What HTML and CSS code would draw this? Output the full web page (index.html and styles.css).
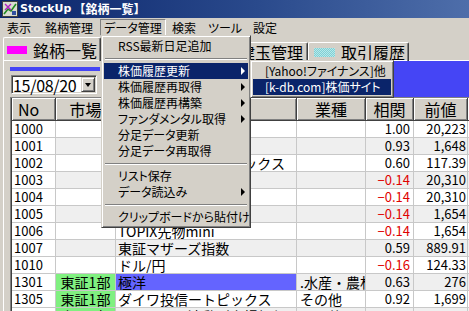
FILE: index.html
```html
<!DOCTYPE html>
<html lang="ja">
<head>
<meta charset="utf-8">
<title>StockUp</title>
<link rel="stylesheet" href="styles.css">
</head>
<body>
<div class="titlebar">
  <svg class="appicon" viewBox="0 0 16 16"><rect x="0.5" y="0.5" width="15" height="15" fill="#d8dcd0" stroke="#404040"/><path d="M2 13 L6 8 L9 10 L14 3" stroke="#208a20" stroke-width="1.6" fill="none"/><path d="M3 3 L9 9 M9 3 L3 9" stroke="#b020c0" stroke-width="1.4"/><rect x="10" y="10" width="4" height="4" fill="#3050a0"/></svg>
  <span class="t-en">StockUp</span><span class="t-jp">【銘柄一覧】</span>
</div>
<div class="menubar">
  <span class="mb w-hyoji">表示</span>
  <span class="mb w-meigara">銘柄管理</span>
  <span class="mb w-data pressed">データ管理</span>
  <span class="mb w-kensaku">検索</span>
  <span class="mb w-tool">ツール</span>
  <span class="mb w-settei">設定</span>
</div>
<div class="tabs">
  <div class="tab sel t1"><span class="sw mag"></span>銘柄一覧</div>
  <div class="tab t2"><span class="sw yel"></span>チャート</div>
  <div class="tab t3"><span class="sw org"></span>建玉管理</div>
  <div class="tab t4"><span class="sw cyan"></span>取引履歴</div>
</div>
<div class="panel">
  <div class="toolbar">
    <div class="datepane">
      <div class="bluebar"></div>
      <div class="combo"><span class="combo-text">15/08/20</span><span class="combo-btn"><span class="down"></span></span></div>
    </div>
    <div class="bluepane"></div>
  </div>
  <div class="grid">
    <div class="row head">
      <div class="c h-no">No</div><div class="c">市場</div><div class="c"></div><div class="c">業種</div><div class="c">相関</div><div class="c">前値</div><div class="c"></div>
    </div>
    <div class="row"><div class="c no">1000</div><div class="c mk"></div><div class="c nm">日経平均株価</div><div class="c gy"></div><div class="c num">1.00</div><div class="c num pv">20,223</div><div class="c ex"></div></div>
    <div class="row alt"><div class="c no">1001</div><div class="c mk"></div><div class="c nm">TOPIX</div><div class="c gy"></div><div class="c num">0.93</div><div class="c num pv">1,648</div><div class="c ex"></div></div>
    <div class="row"><div class="c no">1002</div><div class="c mk"></div><div class="c nm">ジャスダックインデックス</div><div class="c gy"></div><div class="c num">0.60</div><div class="c num pv">117.39</div><div class="c ex"></div></div>
    <div class="row alt"><div class="c no">1003</div><div class="c mk"></div><div class="c nm">日経225先物</div><div class="c gy"></div><div class="c num neg">−0.14</div><div class="c num pv">20,310</div><div class="c ex"></div></div>
    <div class="row"><div class="c no">1004</div><div class="c mk"></div><div class="c nm">日経225mini</div><div class="c gy"></div><div class="c num neg">−0.14</div><div class="c num pv">20,310</div><div class="c ex"></div></div>
    <div class="row alt"><div class="c no">1005</div><div class="c mk"></div><div class="c nm">TOPIX先物</div><div class="c gy"></div><div class="c num neg">−0.14</div><div class="c num pv">1,654</div><div class="c ex"></div></div>
    <div class="row"><div class="c no">1006</div><div class="c mk"></div><div class="c nm">TOPIX先物mini</div><div class="c gy"></div><div class="c num neg">−0.14</div><div class="c num pv">1,654</div><div class="c ex"></div></div>
    <div class="row alt"><div class="c no">1007</div><div class="c mk"></div><div class="c nm">東証マザーズ指数</div><div class="c gy"></div><div class="c num">0.59</div><div class="c num pv">889.91</div><div class="c ex"></div></div>
    <div class="row"><div class="c no">1010</div><div class="c mk"></div><div class="c nm">ドル/円</div><div class="c gy"></div><div class="c num neg">−0.16</div><div class="c num pv">124.33</div><div class="c ex"></div></div>
    <div class="row alt"><div class="c no">1301</div><div class="c mk green">東証1部</div><div class="c nm hl">極洋</div><div class="c gy">.水産・農林業</div><div class="c num">0.63</div><div class="c num pv">276</div><div class="c ex"></div></div>
    <div class="row"><div class="c no">1305</div><div class="c mk green">東証1部</div><div class="c nm">ダイワ投信ートピックス</div><div class="c gy">その他</div><div class="c num">0.92</div><div class="c num pv">1,699</div><div class="c ex"></div></div>
    <div class="row alt"><div class="c no">1306</div><div class="c mk green">東証1部</div><div class="c nm">ＴＯＰＩＸ連動型上場投信</div><div class="c gy">その他</div><div class="c num">0.92</div><div class="c num pv">1,675</div><div class="c ex"></div></div>
  </div>
</div>

<div class="menu">
  <div class="item">RSS最新日足追加</div>
  <div class="sep"></div>
  <div class="item active">株価履歴更新<span class="arrow"></span></div>
  <div class="item">株価履歴再取得<span class="arrow"></span></div>
  <div class="item">株価履歴再構築<span class="arrow"></span></div>
  <div class="item">ファンダメンタル取得<span class="arrow"></span></div>
  <div class="item">分足データ更新</div>
  <div class="item">分足データ再取得</div>
  <div class="sep"></div>
  <div class="item">リスト保存</div>
  <div class="item">データ読込み<span class="arrow"></span></div>
  <div class="sep"></div>
  <div class="item">クリップボードから貼付け</div>
</div>
<div class="menu submenu">
  <div class="item">[Yahoo!ファイナンス]他</div>
  <div class="item active">[k-db.com]株価サイト</div>
</div>
</body>
</html>
```

FILE: styles.css
```css
* { box-sizing: border-box; margin: 0; padding: 0; }
html, body { width: 469px; height: 311px; overflow: hidden; }
body {
  position: relative;
  background: #d4d0c8;
  color: #000;
  font-family: "Noto Sans CJK JP", "Noto Sans", sans-serif;
  font-size: 12px;
  line-height: 16px;
}

/* title bar */
.titlebar {
  height: 18px;
  display: flex;
  align-items: center;
  padding-left: 2px;
  color: #fff;
  background: linear-gradient(to right, #0a246a 0%, #2a4a8c 55%, #4e6eaa 100%);
}
.appicon { width: 16px; height: 16px; margin-right: 2px; flex: none; }
.t-en { font: bold 11px/16px "DejaVu Sans", sans-serif; }
.t-jp { font: bold 12px/16px "Noto Sans CJK JP", sans-serif; margin-left: 2px; }

/* menu bar */
.menubar {
  height: 19px;
  display: flex;
  padding-top: 1px;
  font-feature-settings: "palt";
}
.mb {
  height: 17px;
  line-height: 15px;
  text-align: center;
  border: 1px solid transparent;
}
.mb.pressed { border-color: #808080 #fff #fff #808080; }
.w-hyoji { width: 38px; }
.w-meigara { width: 62px; }
.w-data { width: 66px; }
.w-kensaku { width: 36px; }
.w-tool { width: 46px; }
.w-settei { width: 34px; }

/* tabs */
.tabs {
  height: 24px;
  display: flex;
  align-items: flex-end;
  padding-left: 3px;
  font-size: 16px;
  line-height: 16px;
  position: relative;
  z-index: 1;
}
.tab {
  height: 19px;
  display: flex;
  align-items: center;
  padding-left: 5px;
  border-top: 1px solid #fff;
  border-left: 1px solid #fff;
  border-right: 1px solid #404040;
  box-shadow: inset -1px 0 #808080;
  border-radius: 2px 2px 0 0;
  white-space: nowrap;
  overflow: hidden;
}
.tab.sel { height: 24px; padding-left: 3px; }
.t1 { width: 98px; }
.t2 { width: 105px; }
.t3 { width: 102px; }
.t4 { width: 101px; }
.sw { display: inline-block; flex: none; margin-right: 6px; }
.mag { width: 20px; height: 8px; background: #ff00ff; }
.cyan {
  width: 21px; height: 9px;
  background: repeating-conic-gradient(#7fd0d4 0 25%, #b8e8ea 0 50%) 0 0 / 2px 2px;
}
.yel { width: 21px; height: 9px; background: #ffff80; }
.org { width: 21px; height: 9px; background: #ffc080; }

/* panel */
.panel {
  margin-left: 3px;
  margin-top: -1px;
  border-top: 1px solid #fff;
  border-left: 1px solid #fff;
  height: 251px;
  padding-left: 6px;
}
.toolbar {
  height: 36px;
  display: flex;
}
.datepane { width: 90px; padding-top: 6px; }
.bluebar { height: 4px; background: #4545f5; }
.combo {
  margin: 4px 0 0 1px;
  width: 86px;
  height: 19px;
  background: #fff;
  border: 1px solid;
  border-color: #808080 #fff #fff #808080;
  box-shadow: inset 1px 1px #404040, inset -1px -1px #d4d0c8;
  display: flex;
  align-items: center;
  padding-left: 1px;
  justify-content: space-between;
}
.combo-text { font-size: 16px; line-height: 16px; letter-spacing: -0.3px; }
.combo-btn {
  width: 14px; height: 15px;
  margin-right: 1px;
  background: #d4d0c8;
  border: 1px solid;
  border-color: #d4d0c8 #404040 #404040 #d4d0c8;
  box-shadow: inset 1px 1px #fff, inset -1px -1px #808080;
  display: flex; align-items: center; justify-content: center;
  flex: none;
}
.down {
  width: 0; height: 0;
  border-left: 3.5px solid transparent;
  border-right: 3.5px solid transparent;
  border-top: 4px solid #000;
}
.bluepane { flex: 1; background: #4545f5; margin-left: 100px; }

/* grid */
.grid {
  border-top: 1px solid #808080;
  border-left: 1px solid #808080;
  box-shadow: inset 1px 0 #404040;
  padding-left: 1px;
}
.row {
  display: grid;
  grid-template-columns: 44px 60px 181px 69px 48px 54px 40px;
  height: 17px;
  font-size: 14px;
  line-height: 16px;
}
.c {
  border-right: 1px solid #c8c8c8;
  border-bottom: 1px solid #c8c8c8;
  overflow: hidden;
  white-space: nowrap;
  background: #fff;
  padding: 0 2px;
}
.row.alt .c { background: #efefef; }
.row .c.no { background: #fff; }
.row.head { height: 23px; font-size: 16px; line-height: 20px; }
.row.head .c {
  background: #d4d0c8;
  text-align: center;
  border-right: 1px solid #404040;
  border-bottom: 1px solid #404040;
  box-shadow: inset 1px 1px #fff, inset -1px -1px #808080;
  padding-top: 1px;
}
.row.head .c.h-no { text-align: left; padding-left: 6px; }
.no { font-size: 13px; }
.mk { text-align: center; }
.nm { padding-left: 2px; }
.gy { padding-left: 3px; }
.num { text-align: right; font-size: 13px; padding-right: 3px; }
.pv { padding-right: 1px; }
.neg { color: #e00000; }
.row .c.green { background: #80f080; }
.row .c.hl { background: #6464ff; }

/* dropdown menus */
.menu {
  position: absolute;
  left: 101px;
  top: 35px;
  width: 150px;
  z-index: 5;
  background: #d4d0c8;
  border: 1px solid;
  border-color: #d4d0c8 #404040 #404040 #d4d0c8;
  box-shadow: inset 1px 1px #fff, inset -1px -1px #808080;
  padding: 2px;
  font-feature-settings: "palt";
}
.item {
  position: relative;
  height: 16px;
  line-height: 16px;
  padding-left: 14px;
  white-space: nowrap;
}
.item.active { background: #0a246a; color: #fff; }
.arrow {
  position: absolute;
  right: 3px;
  top: 4px;
  width: 0; height: 0;
  border-top: 4px solid transparent;
  border-bottom: 4px solid transparent;
  border-left: 4px solid #000;
}
.item.active .arrow { border-left-color: #fff; }
.sep {
  height: 9px;
  margin: 0 1px;
  background: linear-gradient(#d4d0c8 0 4px, #808080 4px 5px, #fff 5px 6px, #d4d0c8 6px);
}
.submenu {
  left: 250px;
  top: 60px;
  width: 144px;
  z-index: 6;
}
.submenu .item { padding-left: 12px; }
```
